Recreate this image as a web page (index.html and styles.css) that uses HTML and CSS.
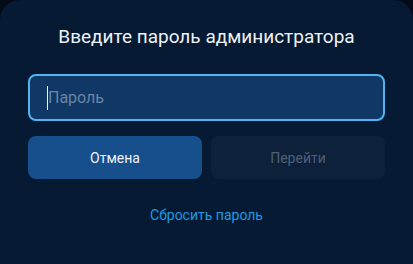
FILE: index.html
```html
<!DOCTYPE html>
<html lang="ru">
<head>
    <meta charset="UTF-8">
    <meta name="viewport" content="width=device-width, initial-scale=1.0">
    <title>Пароль администратора</title>
    <link rel="stylesheet" href="styles.css">
</head>
<body>

    <div class="dialog">
        <h2 class="title">Введите пароль администратора</h2>

        <div class="field">
            <span class="caret"></span>
            <span class="placeholder">Пароль</span>
        </div>

        <div class="actions">
            <button class="button cancel-btn">Отмена</button>
            <button class="button go-btn" disabled>Перейти</button>
        </div>

        <a class="reset-link" href="#">Сбросить пароль</a>
    </div>

</body>
</html>
```

FILE: styles.css
```css
body {
    font-family: Roboto, "Liberation Sans", sans-serif;
    background-color: #020b17;
    margin: 0;
    padding: 0;
    height: 264px;
    overflow: hidden;
}
.dialog {
    display: flex;
    flex-direction: column;
    align-items: stretch;
    height: 264px;
    padding: 25px 28px 0 28px;
    box-sizing: border-box;
    background-color: #061a33;
    border-radius: 20px 20px 0 0;
}
.title {
    margin: 0 0 25px 0;
    font-size: 19px;
    font-weight: 400;
    line-height: 24px;
    text-align: center;
    color: #eef2f7;
}
.field {
    display: flex;
    align-items: center;
    height: 47px;
    padding: 0 16px 0 18px;
    box-sizing: border-box;
    border: 2px solid #4fb4ef;
    border-radius: 8px;
    background-color: #0f3866;
}
.caret {
    width: 1px;
    height: 24px;
    margin-left: -1px;
    background-color: #f2f6fa;
}
.placeholder {
    font-size: 16px;
    color: #6c84a2;
}
.actions {
    display: flex;
    gap: 9px;
    margin-top: 15px;
}
.button {
    flex: 1;
    height: 43px;
    border: none;
    border-radius: 8px;
    font-family: inherit;
    font-size: 14px;
}
.cancel-btn {
    background-color: #174e8c;
    color: #eef2f7;
}
.go-btn {
    background-color: #0e213b;
    color: #4c5f77;
}
.reset-link {
    align-self: center;
    margin-top: 26px;
    font-size: 14px;
    line-height: 20px;
    color: #1e9ae4;
    text-decoration: none;
}
```
